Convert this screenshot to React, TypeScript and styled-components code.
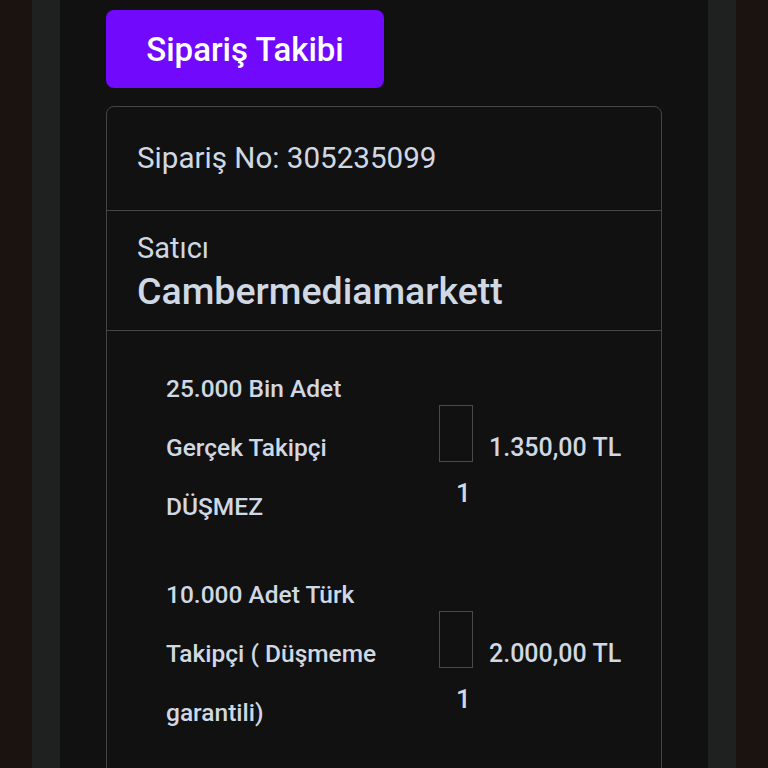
import React from "react";
import styled, { createGlobalStyle } from "styled-components";

const Global = createGlobalStyle`
  html, body { margin: 0; padding: 0; background: #1a1310; }
  body { font-family: Roboto, "Noto Sans", "Liberation Sans", sans-serif; }
  * { box-sizing: border-box; }
`;

const Frame = styled.div`
  height: 768px;
  padding: 0 32px;
  background: #1a1310;
  overflow: hidden;
`;

const Gutter = styled.div`
  height: 100%;
  padding: 0 28px;
  background: #1f2120;
`;

const Main = styled.main`
  height: 100%;
  background: #111111;
  padding: 10px 46px 0 46px;
  display: flex;
  flex-direction: column;
  gap: 18px;
`;

const TrackButton = styled.button`
  align-self: flex-start;
  flex-shrink: 0;
  width: 278px;
  height: 78px;
  border: none;
  border-radius: 8px;
  background: #7109fd;
  color: #ffffff;
  font-family: Roboto, sans-serif;
  font-size: 33px;
  font-weight: 500;
  cursor: pointer;
`;

const Card = styled.section`
  flex-shrink: 0;
  border: 1px solid #464646;
  border-radius: 8px;
  color: #d0d8e4;
  display: flex;
  flex-direction: column;
`;

const Section = styled.div<{ $pad: string }>`
  padding: ${(p) => p.$pad};
  border-bottom: 1px solid #464646;
  &:last-child { border-bottom: none; }
`;

const OrderNo = styled.div`
  font-size: 29.6px;
  font-weight: 400;
  line-height: 30px;
`;

const Label = styled.div`
  font-size: 29px;
  line-height: 34px;
`;

const Seller = styled.div`
  margin-top: 2px;
  font-size: 37.5px;
  font-weight: 500;
  line-height: 48px;
`;

const Items = styled.div`
  padding: 28px 0 80px 59px;
  display: flex;
  flex-direction: column;
  gap: 29px;
`;

const Item = styled.div`
  display: flex;
  align-items: flex-start;
`;

const Name = styled.div`
  width: 250px;
  margin-right: 23px;
  font-size: 24.5px;
  font-weight: 500;
  line-height: 59px;
`;

const Meta = styled.div`
  display: flex;
  flex-direction: column;
  margin-top: 46px;
`;

const PriceLine = styled.div`
  display: flex;
  align-items: flex-end;
  gap: 16px;
`;

const Thumb = styled.div`
  width: 34px;
  height: 57px;
  border: 1px solid #4a4a4a;
`;

const Price = styled.div`
  font-size: 25px;
  font-weight: 500;
  line-height: 26px;
  margin-bottom: 1px;
`;

const Qty = styled.div`
  font-size: 26px;
  font-weight: 500;
  padding-left: 17px;
  margin-top: 17px;
  line-height: 28px;
`;

const items = [
  { name: "25.000 Bin Adet Gerçek Takipçi DÜŞMEZ", price: "1.350,00 TL", qty: 1 },
  { name: "10.000 Adet Türk Takipçi ( Düşmeme garantili)", price: "2.000,00 TL", qty: 1 },
];

export default function App() {
  return (
    <>
      <Global />
      <Frame>
        <Gutter>
          <Main>
            <TrackButton>Sipariş Takibi</TrackButton>
            <Card>
              <Section $pad="36px 30px 37px">
                <OrderNo>Sipariş No: 305235099</OrderNo>
              </Section>
              <Section $pad="20px 30px 15px">
                <Label>Satıcı</Label>
                <Seller>Cambermediamarkett</Seller>
              </Section>
              <Section $pad="0">
                <Items>
                  {items.map((it) => (
                    <Item key={it.name}>
                      <Name>{it.name}</Name>
                      <Meta>
                        <PriceLine>
                          <Thumb />
                          <Price>{it.price}</Price>
                        </PriceLine>
                        <Qty>{it.qty}</Qty>
                      </Meta>
                    </Item>
                  ))}
                </Items>
              </Section>
            </Card>
          </Main>
        </Gutter>
      </Frame>
    </>
  );
}
